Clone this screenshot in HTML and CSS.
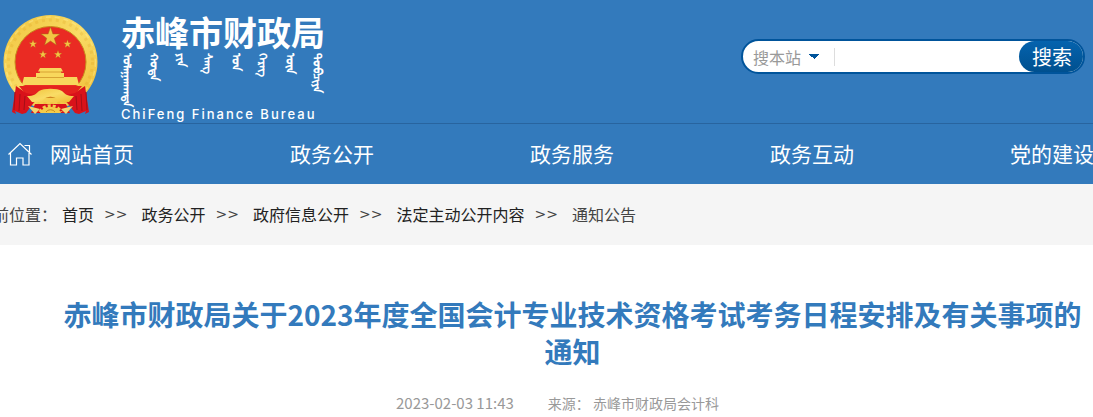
FILE: index.html
```
<!DOCTYPE html>
<html lang="zh-CN">
<head>
    <meta charset="UTF-8">
    <meta name="viewport" content="width=device-width, initial-scale=1.0">
    <title>赤峰市财政局</title>
    <link rel="stylesheet" href="styles.css">
</head>
<body>
    <header class="header">
        <a class="logo" href="#">
            <svg class="emblem" viewBox="0 0 96 102" aria-hidden="true">
                <defs>
                    <linearGradient id="gold" x1="0" y1="0" x2="1" y2="1">
                        <stop offset="0" stop-color="#f0c33c"/>
                        <stop offset="0.5" stop-color="#f9dc66"/>
                        <stop offset="1" stop-color="#efba30"/>
                    </linearGradient>
                    <path id="star" d="M0-10 2.4-3.1 9.5-3.1 3.8 1.2 5.9 8.1 0 4-5.9 8.1-3.8 1.2-9.5-3.1-2.4-3.1z"/>
                </defs>
                <circle cx="47.500" cy="48" r="47" fill="url(#gold)"/>
                <circle cx="47.500" cy="48" r="42" fill="none" stroke="#d99c1c" stroke-width="3" stroke-dasharray="3 4" opacity=".22"/>
                <circle cx="47.500" cy="48" r="45" fill="none" stroke="#fff09a" stroke-width="1.500" stroke-dasharray="5 4" opacity=".4"/>
                <circle cx="47.500" cy="48" r="35.500" fill="#ea2b23" stroke="#c8891b"/>
                <g fill="#f3c544" stroke="#a96516" stroke-width=".5">
                    <use href="#star" transform="translate(47.500 23)"/>
                    <use href="#star" transform="translate(30 30) scale(.42)"/>
                    <use href="#star" transform="translate(64.500 30) scale(.42)"/>
                    <use href="#star" transform="translate(40 40.500) scale(.42)"/>
                    <use href="#star" transform="translate(55 40.500) scale(.42)"/>
                </g>
                <path d="M37 54h21l2 3.500h-2V59h3v4h13l2 8H19l2-8h12v-4h4v-1.500h-2z" fill="#f8d75c"/>
                <path d="M36 58h23M34 63.500h27" stroke="#cf962a" stroke-width=".8"/>
                <path d="M16 72h63l-8 10H24z" fill="#e4231e"/>
                <path d="M13 72l10 7 14 3-8 9-6 8-4 1-7-3 1 3-4-2z" fill="#d9121a"/>
                <path d="M82 72l-10 7-14 3 8 9 6 8 4 1 7-3-1 3 4-2z" fill="#d9121a"/>
                <path d="M12 78l-1 18M17 80l-1 17M22 82l-1 14M83 78l1 18M78 80l1 17M73 82l1 14" stroke="#a30f18" stroke-width="1"/>
                <path d="M24 82c7 0 9-2 12-5 5-3 18-3 23 0 3 3 5 5 12 5l-5 6c-7 1-10 0-12-3-3-3-10-3-13 0-2 3-5 4-12 3z" fill="url(#gold)"/>
                <path d="M32 90l-4 9h39l-4-9z" fill="#d9121a"/>
                <path d="M25 92l12 3-5 5zM70 92l-12 3 5 5z" fill="#f3d470"/>
                <path d="M37 99a11 9 0 0 1 21 0z" fill="#f4cb49"/>
                <path d="M37 98a11 9 0 0 1 21 0" fill="none" stroke="#f4cb49" stroke-width="3" stroke-dasharray="3 2"/>
                <path d="M43 98a5 4 0 0 1 9 0" fill="none" stroke="#c98b1e"/>
            </svg>
            <span class="logo-text">
                <span class="logo-cn">赤峰市财政局</span>
                <span class="logo-mn" lang="mn"><span>ᠤᠯᠠᠭᠠᠨᠬᠠᠳᠠ</span><span>ᠬᠣᠲᠠ</span><span>ᠶᠢᠨ</span><span>ᠰᠠᠩ</span><span>ᠤᠨ</span><span>ᠬᠡᠷᠡᠭ</span><span>ᠦᠨ</span><span>ᠲᠣᠪᠴᠢᠶᠠ</span></span>
                <span class="logo-en">ChiFeng Finance Bureau</span>
            </span>
        </a>
        <form class="search">
            <select class="search-scope" aria-label="搜索范围">
                <option>搜本站</option>
            </select>
            <input class="search-input" type="text" aria-label="关键词">
            <button class="search-btn" type="button">搜索</button>
        </form>
    </header>

    <nav class="nav">
        <a class="nav-item nav-home" href="#">
            <svg class="home-icon" viewBox="0 0 24 24" aria-hidden="true">
                <path d="M0.500 12.500L12 1.500l11.500 11M2.500 11v12h6v-7h6.500v7h6V11M16.500 3.500h5v7" fill="none" stroke="#fff" stroke-width="1.200"/>
            </svg>
            网站首页
        </a>
        <a class="nav-item" href="#">政务公开</a>
        <a class="nav-item" href="#">政务服务</a>
        <a class="nav-item" href="#">政务互动</a>
        <a class="nav-item" href="#">党的建设</a>
    </nav>

    <div class="crumbs">
        <span class="crumbs-label">当前位置：</span>
        <a href="#">首页</a>
        <span class="sep">&gt;&gt;</span>
        <a href="#">政务公开</a>
        <span class="sep">&gt;&gt;</span>
        <a href="#">政府信息公开</a>
        <span class="sep">&gt;&gt;</span>
        <a href="#">法定主动公开内容</a>
        <span class="sep">&gt;&gt;</span>
        <span>通知公告</span>
    </div>

    <main class="article">
        <h1>赤峰市财政局关于2023年度全国会计专业技术资格考试考务日程安排及有关事项的通知</h1>
        <div class="meta">
            <span class="date">2023-02-03 11:43</span>
            <span>来源： 赤峰市财政局会计科</span>
        </div>
    </main>
</body>
</html>
```
FILE: styles.css
```
* {
    box-sizing: border-box;
}
body {
    margin: 0;
    overflow-x: hidden;
    background: #fff;
    color: #444;
    font-family: "Noto Sans CJK SC", sans-serif;
    font-size: 16px;
}
a {
    color: inherit;
    text-decoration: none;
}

/* header */
.header {
    display: flex;
    justify-content: space-between;
    align-items: flex-start;
    padding: 14px 8px 0 3px;
    height: 124px;
    background: #337abc;
    border-bottom: 1px solid #28649f;
}
.logo {
    display: flex;
    gap: 22px;
    color: #fff;
}
.emblem {
    width: 96px;
    height: 102px;
}
.logo-text {
    display: flex;
    flex-direction: column;
}
.logo-cn {
    font-size: 34px;
    font-weight: bold;
    line-height: 36px;
}
.logo-mn {
    display: flex;
    justify-content: space-between;
    height: 56px;
    padding-top: 3px;
    font-size: 12px;
    font-weight: bold;
    line-height: 14px;
}
.logo-mn span {
    writing-mode: vertical-lr;
}
.logo-en {
    font-family: Inter, "Liberation Sans", sans-serif;
    font-size: 13px;
    font-weight: 500;
    line-height: 16px;
    letter-spacing: 2px;
    white-space: nowrap;
}

/* search */
.search {
    display: flex;
    width: 344px;
    height: 35px;
    margin-top: 25px;
    border: 2px solid #00549b;
    border-radius: 18px;
    background: #fff;
    overflow: hidden;
}
.search-scope {
    width: 82px;
    margin: 0 0 0 10px;
    padding: 0;
    border: none;
    appearance: none;
    background: linear-gradient(#ddd, #ddd) right center / 1px 18px no-repeat,
        conic-gradient(from 315deg at 50% 100%, #00549b 90deg, transparent 0) 56px 13px / 10px 5px no-repeat;
    color: #999;
    font: inherit;
}
.search-input {
    flex: 1;
    min-width: 0;
    border: none;
    outline: none;
    font: inherit;
}
.search-btn {
    width: 66px;
    margin-right: -2px;
    padding: 0;
    border: none;
    border-radius: 18px;
    background: linear-gradient(#0563ae, #00508f);
    color: #fff;
    font-family: inherit;
    font-size: 20px;
}

/* nav */
.nav {
    display: flex;
    height: 60px;
    padding-left: 8px;
    background: #337abc;
    color: #fff;
    font-size: 21px;
    line-height: 58px;
    overflow: hidden;
}
.nav-item {
    flex: 0 0 240px;
}
.nav-home {
    display: flex;
    gap: 18px;
    flex-basis: 282px;
}
.home-icon {
    width: 24px;
    height: 24px;
    margin-top: 18px;
}

/* breadcrumb */
.crumbs {
    display: flex;
    height: 61px;
    margin-left: -23px;
    background: #f5f5f5;
    line-height: 61px;
    white-space: nowrap;
}
.crumbs a {
    color: #222;
}
.crumbs-label {
    margin-right: 5px;
}
.sep {
    margin: 0 14px 0 10px;
    font-family: "DejaVu Sans", sans-serif;
    font-size: 14px;
}

/* article */
.article {
    padding: 51px 0 0 52px;
    text-align: center;
}
h1 {
    margin: 0;
    color: #337abc;
    font-size: 28px;
    line-height: 37px;
}
.meta {
    display: flex;
    justify-content: center;
    gap: 34px;
    margin-top: 23px;
    padding-right: 30px;
    color: #999;
    font-size: 14px;
    line-height: 20px;
}
.date {
    font-size: 15px;
}
```
